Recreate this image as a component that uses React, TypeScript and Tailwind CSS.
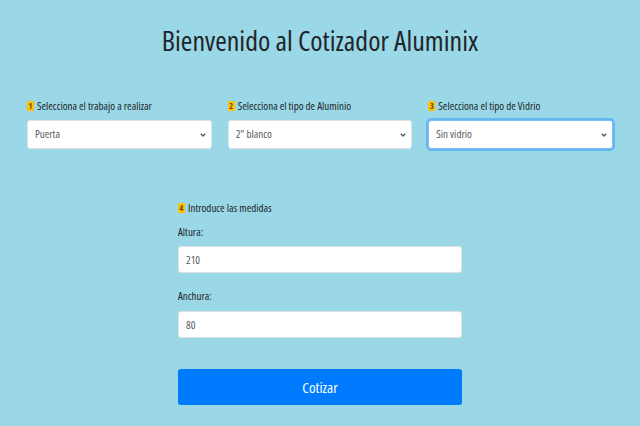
function Badge({ n }: { n: string }) {
  return (
    <span className="inline-flex items-center justify-center w-[7px] h-[10px] bg-[#ffc107] rounded-[1px] text-[8px] leading-none font-bold text-[#6b4a00] mr-[3px]">
      {n}
    </span>
  );
}

function Chevron() {
  return (
    <svg className="absolute right-[6px] top-1/2 -translate-y-1/2 pointer-events-none" width="6" height="4" viewBox="0 0 6 4">
      <polyline points="0.8,0.8 3,3 5.2,0.8" fill="none" stroke="#555" strokeWidth="1.3" />
    </svg>
  );
}

function SelectBox({ label, n, value, focused }: { label: string; n: string; value: string; focused?: boolean }) {
  return (
    <div className="flex flex-col">
      <div className="flex items-center h-[16px] text-[11px] text-[#212529]">
        <Badge n={n} />
        <span>{label}</span>
      </div>
      <div className="relative mt-[6px]">
        <select
          defaultValue={value}
          className={
            "appearance-none w-full h-[29px] bg-white rounded-[3px] pl-[7px] text-[11px] text-[#555b61] outline-none font-['Open_Sans',sans-serif] font-stretch-condensed " +
            (focused
              ? "border border-[#80bdff] shadow-[0_0_0_2px_rgba(0,123,255,0.35)]"
              : "border border-[#dfe3e6]")
          }
        >
          <option>{value}</option>
        </select>
        <Chevron />
      </div>
    </div>
  );
}

export default function App() {
  return (
    <div className="w-full h-[426px] bg-[#9ad8e7] font-['Open_Sans',sans-serif] font-stretch-condensed text-[#212529] overflow-hidden">
      <h1 className="pt-[22px] text-center text-[28px] leading-[36px] font-normal">
        Bienvenido al Cotizador Aluminix
      </h1>
      <div className="mt-[40px] px-[27px] grid grid-cols-3 gap-x-[16px]">
        <SelectBox n="1" label="Selecciona el trabajo a realizar" value="Puerta" />
        <SelectBox n="2" label="Selecciona el tipo de Aluminio" value={'2" blanco'} />
        <SelectBox n="3" label="Selecciona el tipo de Vidrio" value="Sin vidrio" focused />
      </div>
      <div className="w-[284px] mx-auto mt-[51px] flex flex-col">
        <div className="flex items-center h-[16px] text-[11px]">
          <Badge n="4" />
          <span>Introduce las medidas</span>
        </div>
        <label className="mt-[8px] h-[16px] leading-[16px] text-[11px]">Altura:</label>
        <input
          defaultValue="210"
          className="mt-[6px] h-[27px] bg-white border border-[#dfe3e6] rounded-[3px] pl-[7px] text-[11px] text-[#555b61] outline-none"
        />
        <label className="mt-[15px] h-[16px] leading-[16px] text-[11px]">Anchura:</label>
        <input
          defaultValue="80"
          className="mt-[7px] h-[27px] bg-white border border-[#dfe3e6] rounded-[3px] pl-[7px] text-[11px] text-[#555b61] outline-none"
        />
        <button className="mt-[31px] h-[36px] bg-[#007bff] rounded-[3px] text-white text-[15px]">
          Cotizar
        </button>
      </div>
    </div>
  );
}
